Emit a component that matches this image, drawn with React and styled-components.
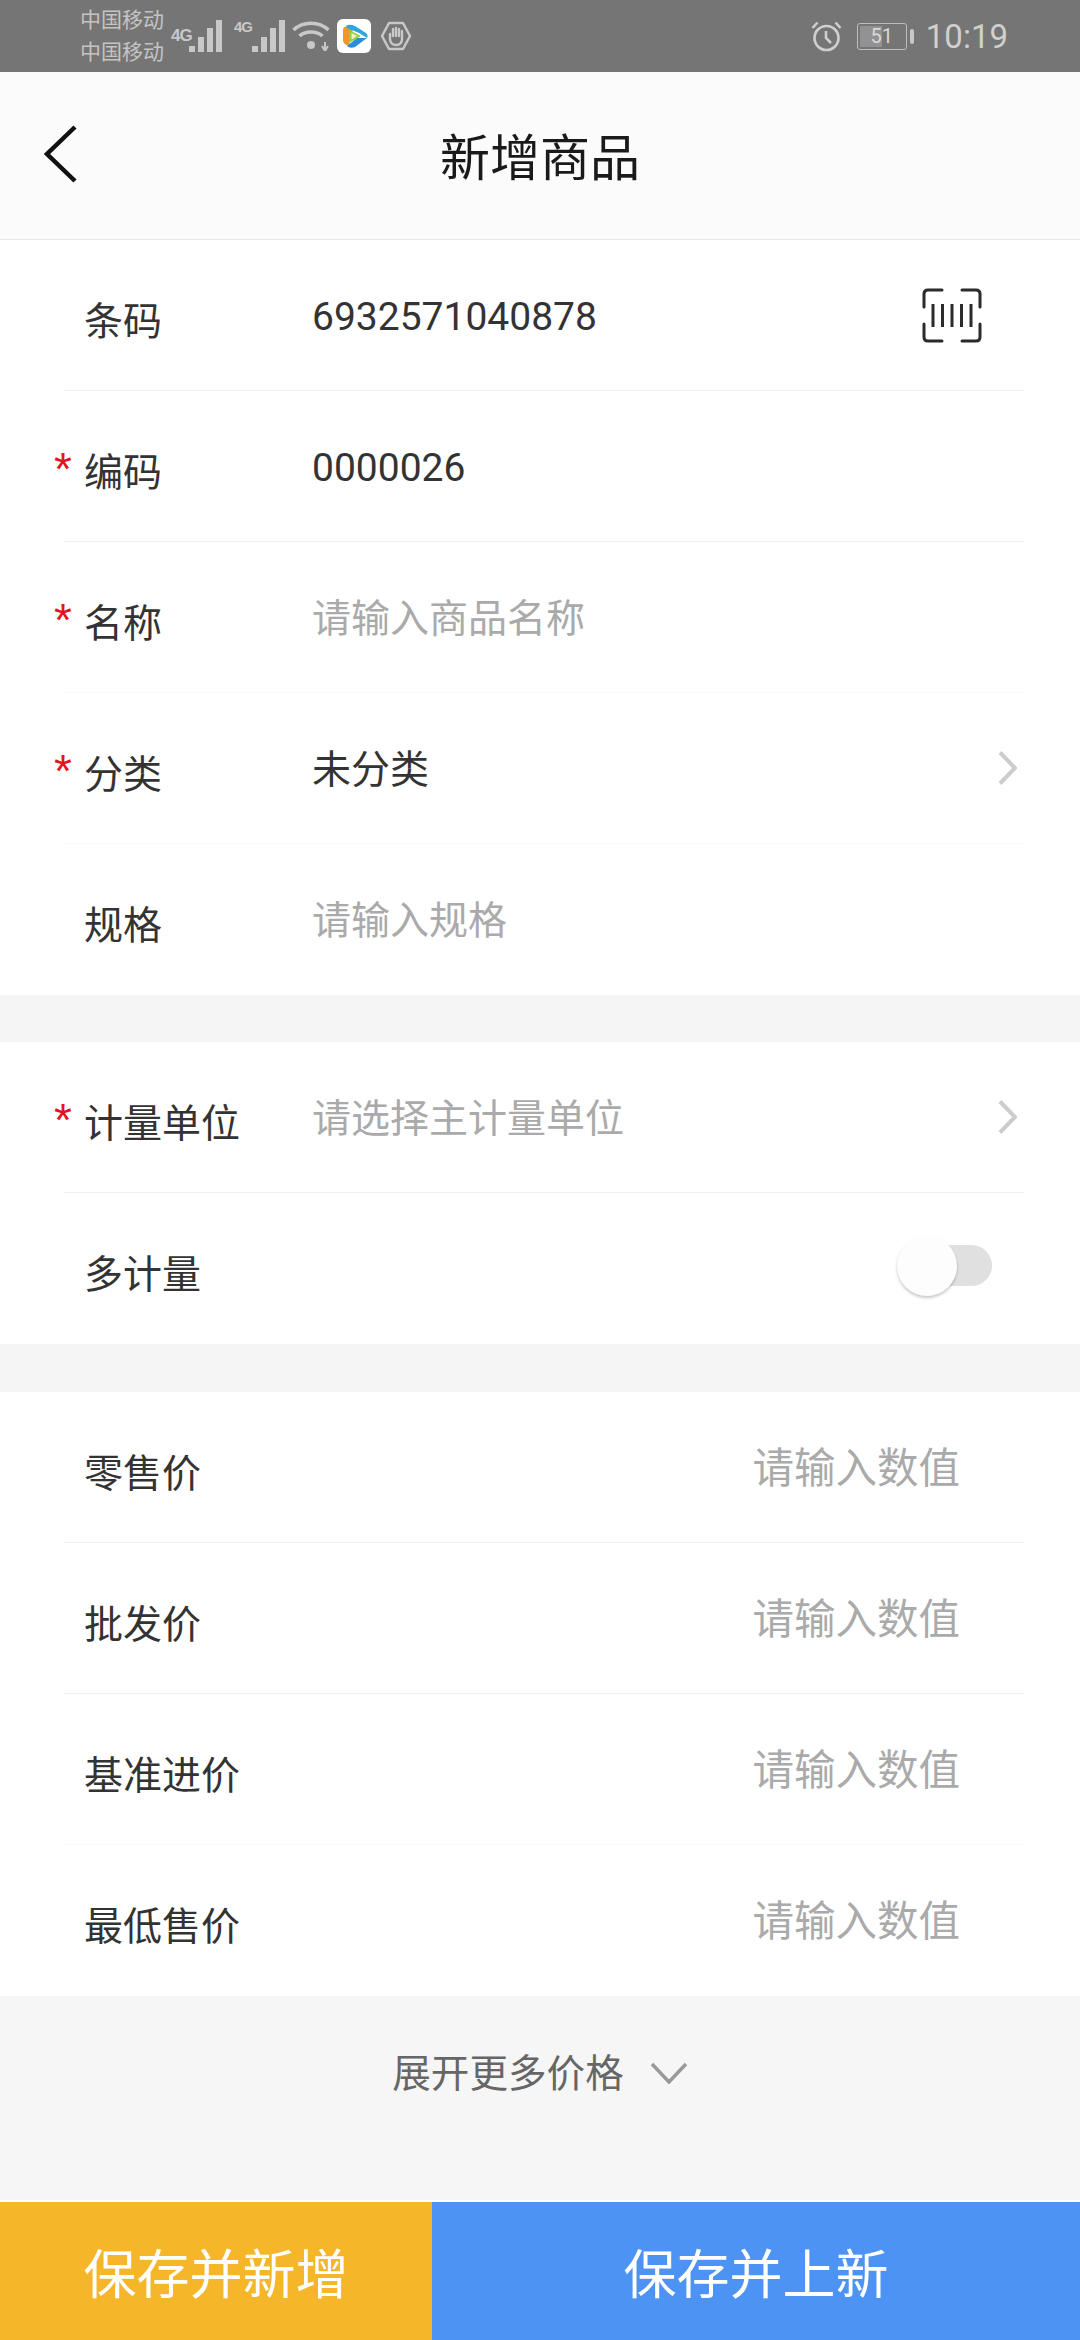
import React from "react"
import styled, { createGlobalStyle } from "styled-components"

const GlobalStyle = createGlobalStyle`
  html, body {
    margin: 0;
    padding: 0;
    background: #f5f5f5;
  }
  body {
    font-family: Roboto, "Noto Sans CJK SC", sans-serif;
  }
`

const Page = styled.div`
  width: 1080px;
  height: 2340px;
  display: flex;
  flex-direction: column;
  overflow: hidden;
  background: #f5f5f5;
`

const StatusBar = styled.div`
  height: 72px;
  flex: none;
  display: flex;
  align-items: center;
  justify-content: space-between;
  padding: 0 72px 0 80px;
  background: #757575;
  color: #cfcfcf;
`
const StatusGroup = styled.div`
  display: flex;
  align-items: center;
`
const Carrier = styled.div`
  font-size: 21px;
  line-height: 32px;
  width: 91px;
  white-space: nowrap;
  color: #c4c4c4;
`
const NetworkTag = styled.span`
  font-family: "Liberation Sans", sans-serif;
  font-size: ${p => p.$small ? 15 : 17}px;
  font-weight: 700;
  letter-spacing: -1px;
  width: 18px;
  margin-left: ${p => p.$small ? 12 : 0}px;
  margin-top: ${p => p.$small ? -20 : 0}px;
  color: #c8c8c8;
`
const StatusIcon = styled.svg`
  display: block;
  flex: none;
  margin-left: ${p => p.$gap || 0}px;
`
const Battery = styled.div`
  width: 50px;
  height: 27px;
  margin-left: 15px;
  box-sizing: border-box;
  border: 1.5px solid #bdbdbd;
  border-radius: 3px;
  position: relative;
  display: flex;
  align-items: center;
  justify-content: center;
  font-size: 20px;
  color: #d8d8d8;
  &::before {
    content: "";
    position: absolute;
    left: 2px;
    top: 2px;
    bottom: 2px;
    width: 22px;
    background: #929292;
  }
  &::after {
    content: "";
    position: absolute;
    right: -8px;
    top: 5px;
    width: 4px;
    height: 15px;
    border-radius: 2px;
    background: #c8c8c8;
  }
`
const BatteryText = styled.span`
  position: relative;
  z-index: 1;
`
const Clock = styled.span`
  font-size: 33px;
  margin-left: 19px;
  color: #cfcfcf;
`

const Header = styled.header`
  height: 167px;
  flex: none;
  display: grid;
  grid-template-columns: 1fr auto 1fr;
  align-items: center;
  background: #fbfbfb;
  border-bottom: 1px solid #e8e8e8;
`
const BackIcon = styled.svg`
  display: block;
  margin: 0 0 3px 43px;
`
const Title = styled.h1`
  margin: 6px 0 0;
  font-size: 50px;
  font-weight: 400;
  line-height: 60px;
  color: #1a1a1a;
`

const Section = styled.section`
  flex: none;
  background: #fff;
  margin-bottom: ${p => p.$gap || 0}px;
`
const Row = styled.div`
  height: 151px;
  box-sizing: border-box;
  margin: 0 56px 0 64px;
  padding-left: 20px;
  display: flex;
  align-items: center;
  border-bottom: 1px solid ${p => p.$line === "none" ? "transparent" : p.$line === "faint" ? "#fafafa" : "#f0f0f0"};
`
const Label = styled.div`
  width: 228px;
  flex: none;
  padding-top: 14px;
  position: relative;
  font-size: 39px;
  line-height: 50px;
  color: #333;
`
const Star = styled.span`
  position: absolute;
  left: -30px;
  top: 10px;
  font-family: "Liberation Sans", sans-serif;
  font-size: 46px;
  line-height: 50px;
  color: #e1151f;
`
const Value = styled.div`
  flex: 1;
  padding-top: 4px;
  font-size: 39px;
  line-height: 50px;
  color: ${p => p.$placeholder ? "#aaa" : "#333"};
`
const PriceHint = styled.div`
  margin-left: auto;
  margin-right: 64px;
  padding-top: 4px;
  font-size: 41.500px;
  line-height: 50px;
  color: #aaa;
`
const Trailing = styled.div`
  flex: none;
  margin-left: ${p => p.$push ? "auto" : 0};
  margin-right: ${p => p.$inset}px;
  display: flex;
`

const SwitchTrack = styled.div`
  width: 85px;
  height: 41px;
  margin-top: -5px;
  border-radius: 21px;
  background: #e0e0e0;
  position: relative;
`
const SwitchKnob = styled.div`
  position: absolute;
  left: -10px;
  top: -9px;
  width: 60px;
  height: 60px;
  border-radius: 50%;
  background: #fdfdfd;
  box-shadow: 0 2px 3px rgba(0, 0, 0, 0.22);
`

const MoreBar = styled.div`
  height: 206px;
  flex: none;
  box-sizing: border-box;
  padding-top: 53px;
  display: flex;
  justify-content: center;
  gap: 26px;
  background: #f6f6f6;
  border-bottom: 2px solid #fff;
`
const MoreText = styled.span`
  font-size: 38.600px;
  line-height: 50px;
  color: #666;
`
const MoreIcon = styled.svg`
  display: block;
  margin-top: 13px;
`

const ActionBar = styled.div`
  flex: 1;
  display: grid;
  grid-template-columns: 432px 1fr;
`
const ActionButton = styled.button`
  border: 0;
  padding: 0;
  background: ${p => p.$bg};
  color: #fff;
  font-family: inherit;
  font-size: 53px;
`

const Chevron = () => (
  <svg width="19" height="34" viewBox="0 0 19 34" fill="none" stroke="#ccc" strokeWidth="4">
    <path d="M2 1.5 L17 17 L2 32.5" />
  </svg>
)

const Signal = () => (
  <StatusIcon width="33" height="32" viewBox="0 0 33 32" fill="#c8c8c8">
    <rect x="0" y="26" width="6" height="6" />
    <rect x="9" y="17" width="6" height="15" />
    <rect x="18" y="8" width="6" height="24" />
    <rect x="27" y="0" width="6" height="32" />
  </StatusIcon>
)

const Wifi = () => (
  <StatusIcon $gap={7} width="38" height="30" viewBox="0 0 38 30" fill="none" stroke="#c8c8c8" strokeWidth="3.5">
    <path d="M1.5 9 C11 0, 27 0, 36.5 9" />
    <path d="M7.5 15 C13 9.5, 25 9.5, 30.5 15" />
    <circle cx="19" cy="24" r="4" fill="#c8c8c8" stroke="none" />
    <path d="M33 21 V30 M30 25 L33 30 L36 25" strokeWidth="2" />
  </StatusIcon>
)

const VideoApp = () => (
  <StatusIcon $gap={7} width="34" height="34" viewBox="0 0 34 34">
    <rect width="34" height="34" rx="6" fill="#fff" />
    <path d="M6 11 C6 8, 8 7, 11 8 L16 10 L12 27 C8 26, 6 24, 6 21 Z" fill="#f0962a" />
    <path d="M9 7 C12 5, 15 6, 18 7 L29 14 C31 16, 31 18, 30 19 L22 14 L10 9 Z" fill="#2aa7e0" />
    <path d="M30 19 L18 28 C15 29, 12 29, 10 27 L20 19 Z" fill="#2a8fd8" />
    <path d="M12 11 L24 17 L12 24 Z" fill="#8fd13f" />
    <path d="M14.500 14 L20 17 L14.500 20.500 Z" fill="#f6f3c8" />
  </StatusIcon>
)

const HandBlock = () => (
  <StatusIcon $gap={9} width="32" height="32" viewBox="0 0 32 32" fill="none" stroke="#c8c8c8">
    <path d="M9 3 H23 L30 16 L23 29 H9 L2 16 Z" strokeWidth="2.5" strokeLinejoin="round" />
    <path d="M10 14 V19 C10 23, 13 25, 16 25 C20 25, 22 23, 22 19 V11 M13 16 V9 M16 16 V8 M19 16 V9" strokeWidth="2.4" strokeLinecap="round" />
  </StatusIcon>
)

const Alarm = () => (
  <StatusIcon width="31" height="32" viewBox="0 0 31 32" fill="none" stroke="#cfcfcf" strokeWidth="2.600">
    <circle cx="15.500" cy="18" r="12" />
    <path d="M15 11 V18 L20 23" />
    <path d="M1.500 8 L6.500 2.500 M29.500 8 L24.500 2.500" />
  </StatusIcon>
)

const ScanIcon = () => (
  <svg width="60" height="55" viewBox="0 0 60 55" fill="none" stroke="#2b2b2b" strokeWidth="3" strokeLinecap="round">
    <path d="M20 2 H6 Q2 2 2 6 V19" />
    <path d="M40 2 H54 Q58 2 58 6 V19" />
    <path d="M20 53 H6 Q2 53 2 49 V36" />
    <path d="M40 53 H54 Q58 53 58 49 V36" />
    <path d="M11 16 V39 M20.500 16 V39 M30 16 V39 M39.500 16 V39 M49 16 V39" strokeLinecap="butt" />
  </svg>
)

const App = () => {
  return (
    <Page>
      <GlobalStyle />
      <StatusBar>
        <StatusGroup>
          <Carrier>
            中国移动
            <br />
            中国移动
          </Carrier>
          <NetworkTag>4G</NetworkTag>
          <Signal />
          <NetworkTag $small>4G</NetworkTag>
          <Signal />
          <Wifi />
          <VideoApp />
          <HandBlock />
        </StatusGroup>
        <StatusGroup>
          <Alarm />
          <Battery>
            <BatteryText>51</BatteryText>
          </Battery>
          <Clock>10:19</Clock>
        </StatusGroup>
      </StatusBar>

      <Header>
        <BackIcon width="36" height="60" viewBox="0 0 36 60" fill="none" stroke="#111" strokeWidth="4.500">
          <path d="M32 3 L4 30 L32 57" />
        </BackIcon>
        <Title>新增商品</Title>
      </Header>

      <Section $gap={47}>
        <Row>
          <Label>条码</Label>
          <Value>6932571040878</Value>
          <Trailing $inset={42}>
            <ScanIcon />
          </Trailing>
        </Row>
        <Row>
          <Label>
            <Star>*</Star>编码
          </Label>
          <Value>0000026</Value>
        </Row>
        <Row $line="faint">
          <Label>
            <Star>*</Star>名称
          </Label>
          <Value $placeholder>请输入商品名称</Value>
        </Row>
        <Row $line="faint">
          <Label>
            <Star>*</Star>分类
          </Label>
          <Value>未分类</Value>
          <Trailing $inset={7}>
            <Chevron />
          </Trailing>
        </Row>
        <Row $line="none">
          <Label>规格</Label>
          <Value $placeholder>请输入规格</Value>
        </Row>
      </Section>

      <Section $gap={48}>
        <Row>
          <Label>
            <Star>*</Star>计量单位
          </Label>
          <Value $placeholder>请选择主计量单位</Value>
          <Trailing $inset={7}>
            <Chevron />
          </Trailing>
        </Row>
        <Row $line="none">
          <Label>多计量</Label>
          <Trailing $inset={32} $push>
            <SwitchTrack>
              <SwitchKnob />
            </SwitchTrack>
          </Trailing>
        </Row>
      </Section>

      <Section>
        <Row>
          <Label>零售价</Label>
          <PriceHint>请输入数值</PriceHint>
        </Row>
        <Row>
          <Label>批发价</Label>
          <PriceHint>请输入数值</PriceHint>
        </Row>
        <Row $line="faint">
          <Label>基准进价</Label>
          <PriceHint>请输入数值</PriceHint>
        </Row>
        <Row $line="none">
          <Label>最低售价</Label>
          <PriceHint>请输入数值</PriceHint>
        </Row>
      </Section>

      <MoreBar>
        <MoreText>展开更多价格</MoreText>
        <MoreIcon width="38" height="22" viewBox="0 0 38 22" fill="none" stroke="#999" strokeWidth="3.500">
          <path d="M2 2 L19 20 L36 2" />
        </MoreIcon>
      </MoreBar>

      <ActionBar>
        <ActionButton $bg="#f6b62a">保存并新增</ActionButton>
        <ActionButton $bg="#4d93f3">保存并上新</ActionButton>
      </ActionBar>
    </Page>
  )
}

export default App
